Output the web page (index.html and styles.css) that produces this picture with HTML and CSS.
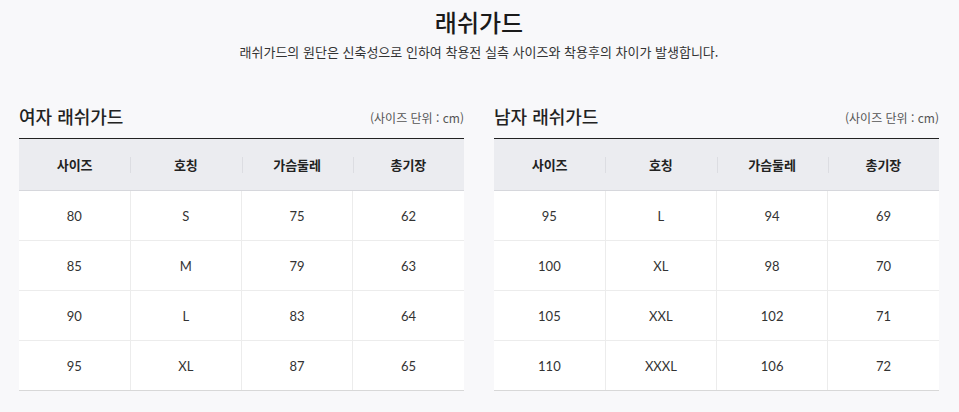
FILE: index.html
```html
<!DOCTYPE html>
<html lang="ko">
<head>
<meta charset="utf-8">
<link rel="stylesheet" href="styles.css">
</head>
<body>
<div class="page">
  <header class="intro">
    <h1 class="title">래쉬가드</h1>
    <p class="desc">래쉬가드의 원단은 신축성으로 인하여 착용전 실측 사이즈와 착용후의 차이가 발생합니다.</p>
  </header>
  <div class="tables">
    <section class="guide">
      <div class="guide-head">
        <h2 class="guide-title">여자 래쉬가드</h2>
        <span class="unit">(사이즈 단위 : cm)</span>
      </div>
      <table class="size-table">
        <thead>
          <tr><th>사이즈</th><th>호칭</th><th>가슴둘레</th><th>총기장</th></tr>
        </thead>
        <tbody>
          <tr><td>80</td><td>S</td><td>75</td><td>62</td></tr>
          <tr><td>85</td><td>M</td><td>79</td><td>63</td></tr>
          <tr><td>90</td><td>L</td><td>83</td><td>64</td></tr>
          <tr><td>95</td><td>XL</td><td>87</td><td>65</td></tr>
        </tbody>
      </table>
    </section>
    <section class="guide">
      <div class="guide-head">
        <h2 class="guide-title">남자 래쉬가드</h2>
        <span class="unit">(사이즈 단위 : cm)</span>
      </div>
      <table class="size-table">
        <thead>
          <tr><th>사이즈</th><th>호칭</th><th>가슴둘레</th><th>총기장</th></tr>
        </thead>
        <tbody>
          <tr><td>95</td><td>L</td><td>94</td><td>69</td></tr>
          <tr><td>100</td><td>XL</td><td>98</td><td>70</td></tr>
          <tr><td>105</td><td>XXL</td><td>102</td><td>71</td></tr>
          <tr><td>110</td><td>XXXL</td><td>106</td><td>72</td></tr>
        </tbody>
      </table>
    </section>
  </div>
</div>
</body>
</html>
```

FILE: styles.css
```css
* { box-sizing: border-box; }
html, body { margin: 0; padding: 0; }
body {
  background: #f8f8fa;
  font-family: Lato, "Noto Sans CJK KR", sans-serif;
  color: #222;
}
.page {
  padding: 6px 20px 0 19px;
}
.intro { text-align: center; }
.title {
  margin: 0;
  font-family: "Noto Sans CJK KR", sans-serif;
  font-size: 24px;
  line-height: 32px;
  font-weight: 500;
  color: #1a1a1a;
}
.desc {
  margin: 5px 0 0;
  font-family: "Noto Sans CJK KR", sans-serif;
  font-size: 13px;
  line-height: 18px;
  color: #333;
}
.tables {
  display: flex;
  gap: 30px;
  margin-top: 43px;
}
.guide { flex: 1; }
.guide-head {
  display: flex;
  justify-content: space-between;
  align-items: center;
  height: 24px;
  margin-bottom: 10px;
}
.guide-title {
  margin: 0;
  font-family: "Noto Sans CJK KR", sans-serif;
  font-size: 18px;
  font-weight: 500;
  color: #222;
}
.unit {
  font-family: "Noto Sans CJK KR", sans-serif;
  font-size: 12px;
  color: #555;
  padding-top: 2px;
}
.size-table {
  width: 100%;
  border-collapse: collapse;
  table-layout: fixed;
  border-top: 1px solid #222;
  background: #fff;
}
.size-table th {
  height: 52px;
  background: #ebecf0;
  border-bottom: 1px solid #d6d7dc;
  font-family: "Noto Sans CJK KR", sans-serif;
  font-size: 13px;
  font-weight: 700;
  color: #222;
  padding: 0;
  position: relative;
}
.size-table th + th::before {
  content: "";
  position: absolute;
  left: 0;
  top: 18px;
  height: 16px;
  width: 1px;
  background: #dcdde2;
}
.size-table td {
  height: 50px;
  text-align: center;
  font-size: 13px;
  color: #333;
  padding: 0;
  border-bottom: 1px solid #ececec;
}
.size-table td + td { border-left: 1px solid #ececec; }
.size-table tbody tr:last-child td { border-bottom-color: #d8d8d8; }
```
